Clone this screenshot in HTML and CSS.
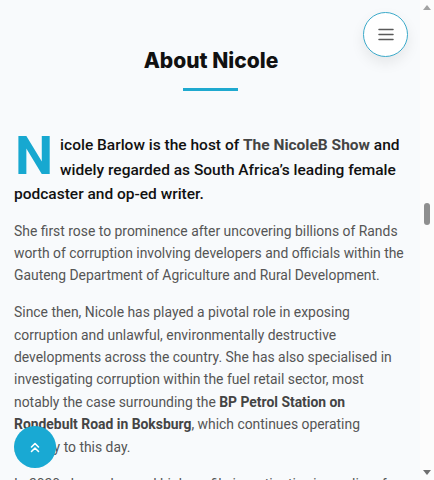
FILE: index.html
```html
<!DOCTYPE html>
<html lang="en">
<head>
    <meta charset="UTF-8">
    <meta name="viewport" content="width=device-width, initial-scale=1.0">
    <title>About Nicole</title>
    <link rel="stylesheet" href="styles.css">
</head>
<body>
    <div class="page">
        <main class="about">
            <h2 class="section-title">About Nicole</h2>
            <span class="title-bar"></span>

            <p class="lead"><span class="drop-cap">N</span>icole Barlow is the host of <strong>The NicoleB Show</strong> and widely regarded as South Africa’s leading female podcaster and op-ed writer.</p>
            <p>She first rose to prominence after uncovering billions of Rands worth of corruption involving developers and officials within the Gauteng Department of Agriculture and Rural Development.</p>
            <p>Since then, Nicole has played a pivotal role in exposing corruption and unlawful, environmentally destructive developments across the country. She has also specialised in investigating corruption within the fuel retail sector, most notably the case surrounding the <strong>BP Petrol Station on Rondebult Road in Boksburg</strong>, which continues operating illegally to this day.</p>
            <p>In 2020 she exchanged high-profile investigative journalism for a life in front of the microphone and on the page.</p>
        </main>

        <!-- fake scrollbar, page is scrolled to the about section -->
        <div class="scrollbar">
            <span class="sb-arrow sb-up"></span>
            <div class="sb-track"><span class="sb-thumb"></span></div>
            <span class="sb-arrow sb-down"></span>
        </div>
    </div>

    <button class="menu-btn" aria-label="Menu">
        <svg width="16" height="13" viewBox="0 0 16 13"><path d="M1 1.5h14M1 6.5h14M1 11.5h14" stroke="#5a5a5a" stroke-width="1.5" stroke-linecap="round"/></svg>
    </button>

    <button class="top-btn" aria-label="Back to top">
        <svg width="12" height="13" viewBox="0 0 12 13"><path d="M2.5 6L6 2.5 9.5 6M2.5 10.5L6 7l3.5 3.5" fill="none" stroke="#fff" stroke-width="1.6" stroke-linecap="round" stroke-linejoin="round"/></svg>
    </button>
</body>
</html>
```

FILE: styles.css
```css
/* Global Styles */
html, body {
    margin: 0;
    padding: 0;
    height: 100%;
}

body {
    font-family: Roboto, "Liberation Sans", sans-serif;
    background-color: #f8fafc;
    color: #555;
    overflow: hidden;
}

.page {
    display: flex;
    height: 100vh;
}

.about {
    flex: 1;
    min-width: 0;
    padding: 41px 12px 0 14px;
}

.section-title {
    font-family: Inter, "Open Sans", sans-serif;
    font-size: 21px;
    font-weight: 800;
    color: #111;
    text-align: center;
    margin: 0;
    line-height: 40px;
}

.title-bar {
    display: block;
    width: 55px;
    height: 3px;
    background-color: #1fa9cf;
    margin: 7px auto 42px 169px;
}

.about p {
    font-size: 13.9px;
    line-height: 22.4px;
    margin: 0 0 14.5px;
}

.about p strong {
    color: #444;
    font-weight: 700;
}

.about .lead {
    font-size: 15.5px;
    line-height: 24.5px;
    font-weight: 500;
    color: #111;
    margin-bottom: 13px;
}

.lead strong {
    color: #111;
}

.drop-cap {
    float: left;
    font-size: 54px;
    line-height: 42px;
    font-weight: 700;
    color: #17a8d0;
    margin: 2px 7px 0 1px;
}

/* Scrollbar column */
.scrollbar {
    width: 14px;
    background-color: #fcfcfc;
    display: flex;
    flex-direction: column;
    align-items: center;
}

.sb-arrow {
    width: 0;
    height: 0;
    border-left: 4px solid transparent;
    border-right: 4px solid transparent;
}

.sb-up {
    margin-top: 5px;
    border-bottom: 5px solid #a3a3a3;
}

.sb-down {
    margin-bottom: 5px;
    border-top: 5px solid #707070;
}

.sb-track {
    flex: 1;
    width: 100%;
    display: flex;
    justify-content: center;
}

.sb-thumb {
    width: 6px;
    height: 22px;
    margin-top: 193px;
    border-radius: 3px;
    background-color: #8f8f8f;
}

/* Floating buttons */
.menu-btn {
    position: fixed;
    top: 12px;
    left: 363px;
    width: 45px;
    height: 45px;
    border-radius: 50%;
    border: 1.5px solid #3aa9c9;
    background-color: #fff;
    box-shadow: 0 6px 14px rgba(0,0,0,0.08);
    display: flex;
    align-items: center;
    justify-content: center;
    padding: 0;
    cursor: pointer;
}

.top-btn {
    position: fixed;
    left: 14px;
    top: 426px;
    width: 42px;
    height: 42px;
    border-radius: 50%;
    border: none;
    background-color: #19a9d3;
    display: flex;
    align-items: center;
    justify-content: center;
    padding: 0;
    cursor: pointer;
}
```
